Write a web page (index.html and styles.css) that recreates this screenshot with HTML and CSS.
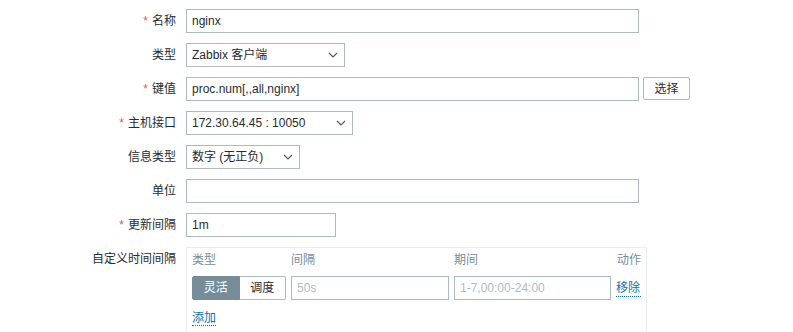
FILE: index.html
```html
<!DOCTYPE html>
<html>
<head lang="zh">
    <meta charset="UTF-8">
    <title>监控项</title>
    <link rel="stylesheet" href="styles.css">
</head>
<body>
<div class="form">
    <div class="row">
        <label class="lbl"><span class="req">*</span>名称</label>
        <div class="field"><input class="txt wide" type="text" value="nginx"></div>
    </div>
    <div class="row">
        <label class="lbl">类型</label>
        <div class="field"><div class="sel" style="width:159px">Zabbix 客户端<svg class="arr" width="10" height="6" viewBox="0 0 10 6"><path d="M1 1l4 4 4-4" fill="none" stroke="#4f5b61" stroke-width="1.2"/></svg></div></div>
    </div>
    <div class="row">
        <label class="lbl"><span class="req">*</span>键值</label>
        <div class="field">
            <input class="txt wide" type="text" value="proc.num[,,all,nginx]">
            <button class="btn">选择</button>
        </div>
    </div>
    <div class="row">
        <label class="lbl"><span class="req">*</span>主机接口</label>
        <div class="field"><div class="sel" style="width:167px">172.30.64.45 : 10050<svg class="arr" width="10" height="6" viewBox="0 0 10 6"><path d="M1 1l4 4 4-4" fill="none" stroke="#4f5b61" stroke-width="1.2"/></svg></div></div>
    </div>
    <div class="row">
        <label class="lbl">信息类型</label>
        <div class="field"><div class="sel" style="width:114px">数字 (无正负)<svg class="arr" width="10" height="6" viewBox="0 0 10 6"><path d="M1 1l4 4 4-4" fill="none" stroke="#4f5b61" stroke-width="1.2"/></svg></div></div>
    </div>
    <div class="row">
        <label class="lbl">单位</label>
        <div class="field"><input class="txt wide" type="text" value=""></div>
    </div>
    <div class="row">
        <label class="lbl"><span class="req">*</span>更新间隔</label>
        <div class="field"><input class="txt short" type="text" value="1m"></div>
    </div>
    <div class="row last">
        <label class="lbl">自定义时间间隔</label>
        <div class="field">
            <div class="intervals">
                <div class="grid">
                    <div class="hd">类型</div>
                    <div class="hd">间隔</div>
                    <div class="hd">期间</div>
                    <div class="hd right">动作</div>

                    <div class="radio">
                        <span class="on">灵活</span><span>调度</span>
                    </div>
                    <input class="txt" type="text" placeholder="50s">
                    <input class="txt" type="text" placeholder="1-7,00:00-24:00">
                    <a class="link" href="#">移除</a>
                </div>
                <div class="add"><a class="link" href="#">添加</a></div>
            </div>
        </div>
    </div>
</div>
</body>
</html>
```
FILE: styles.css
```css
*{
    margin: 0;
    padding: 0;
    box-sizing: border-box;
}
body{
    background: #fff;
    font: 12px/16px "Liberation Sans", Arial, "Noto Sans CJK SC", sans-serif;
    color: #1f2c33;
    overflow: hidden;
}
.form{
    padding-top: 9px;
}
.row{
    display: flex;
    margin-bottom: 10px;
}
.row.last{
    margin-bottom: 0;
}
.lbl{
    width: 186px;
    padding-right: 10px;
    text-align: right;
    line-height: 24px;
    flex-shrink: 0;
}
.req{
    color: #e45959;
    margin-right: 4px;
}
.field{
    display: flex;
    gap: 4px;
}
.txt{
    height: 24px;
    border: 1px solid #acbbc2;
    background: #fff;
    padding: 0 5px;
    font: inherit;
    color: #1f2c33;
    outline: none;
}
.txt::placeholder{
    color: #acbbc2;
}
.wide{
    width: 453px;
}
.short{
    width: 150px;
}
.sel{
    height: 24px;
    border: 1px solid #acbbc2;
    padding: 0 5px;
    line-height: 22px;
    display: flex;
    justify-content: space-between;
    align-items: center;
}
.arr{
    margin-right: 1px;
}
.btn{
    width: 47px;
    height: 23px;
    border: 1px solid #acbbc2;
    border-radius: 2px;
    background: #fff;
    color: #1f2c33;
    font: inherit;
}
.intervals{
    width: 461px;
    height: 85px;
    border: 1px solid #ebeef0;
    border-bottom: 0;
    padding: 3px 5px 0 5px;
}
.grid{
    display: grid;
    grid-template-columns: 94px 158px 157px auto;
    column-gap: 5px;
    row-gap: 6px;
    align-items: center;
}
.hd{
    color: #768d99;
    line-height: 19px;
}
.right{
    text-align: right;
}
.radio{
    display: flex;
    height: 24px;
}
.radio span{
    flex: 1;
    text-align: center;
    line-height: 22px;
    border: 1px solid #acbbc2;
    border-left: 0;
    border-radius: 0 2px 2px 0;
}
.radio span.on{
    background: #768d99;
    border: 1px solid #768d99;
    color: #fff;
    border-radius: 2px 0 0 2px;
}
.grid .txt{
    width: 100%;
}
.link{
    color: #0275b8;
    text-decoration: none;
    border-bottom: 1px dotted #0275b8;
}
.add{
    margin-top: 10px;
    line-height: 17px;
}
```
